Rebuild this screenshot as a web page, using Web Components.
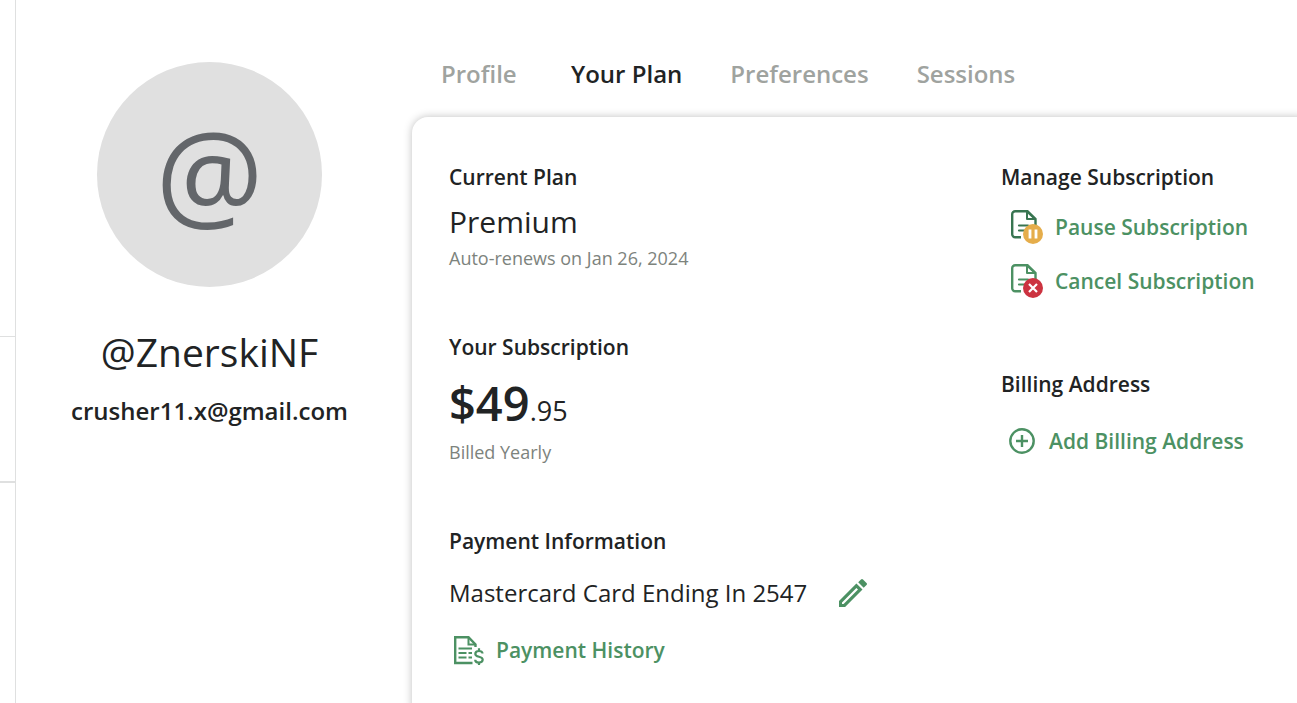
<!DOCTYPE html>
<html lang="en">
<head>
<meta charset="utf-8">
<meta name="viewport" content="width=device-width, initial-scale=1">
<title>Account – Your Plan</title>
<style>
  html, body { margin: 0; height: 100%; }
  body {
    font-family: "Open Sans", "Noto Sans", sans-serif;
    color: #212324;
    background: #fff;
    overflow: hidden;
  }
</style>
</head>
<body>
<account-page>
  <side-rail slot="rail"></side-rail>
  <user-summary slot="user" initial="@">
    <span slot="name">@ZnerskiNF</span>
    <span slot="email">crusher11.x@gmail.com</span>
  </user-summary>
  <tab-bar slot="tabs">
    <tab-link>Profile</tab-link>
    <tab-link current>Your Plan</tab-link>
    <tab-link>Preferences</tab-link>
    <tab-link>Sessions</tab-link>
  </tab-bar>
  <plan-card slot="card">
    <plan-section>
      <span slot="title">Current Plan</span>
      <plan-name>Premium</plan-name>
      <plan-note>Auto-renews on Jan 26, 2024</plan-note>
    </plan-section>
    <plan-section>
      <span slot="title">Your Subscription</span>
      <plan-price><span slot="whole">$49</span><span slot="cents">.95</span></plan-price>
      <plan-note>Billed Yearly</plan-note>
    </plan-section>
    <plan-section>
      <span slot="title">Payment Information</span>
      <payment-method>Mastercard Card Ending In 2547</payment-method>
      <action-link icon="history">Payment History</action-link>
    </plan-section>
    <plan-section slot="side">
      <span slot="title">Manage Subscription</span>
      <action-list>
        <action-link icon="pause">Pause Subscription</action-link>
        <action-link icon="cancel">Cancel Subscription</action-link>
      </action-list>
    </plan-section>
    <plan-section slot="side">
      <span slot="title">Billing Address</span>
      <action-list roomy>
        <action-link icon="add">Add Billing Address</action-link>
      </action-list>
    </plan-section>
  </plan-card>
</account-page>

<script>
const define = (name, html) => customElements.define(name, class extends HTMLElement {
  constructor() {
    super();
    this.attachShadow({ mode: 'open' }).innerHTML =
      typeof html === 'function' ? html(this) : html;
  }
});

const docShape = color => `
  <path d="M10 27.200H4.200a3 3 0 0 1-3-3V4.200a3 3 0 0 1 3-3h12.300L24.500 9v6" fill="none" stroke="${color}" stroke-width="2.400"/>
  <path d="M16 1.500V9h8z" fill="none" stroke="${color}" stroke-width="2" stroke-linejoin="round"/>
  <path d="M8 15.500h9M8 20.500h6" stroke="${color}" stroke-width="2.200" stroke-linecap="round"/>`;

const icons = {
  pause: `<svg width="34" height="34" viewBox="-2 0 34 34" aria-hidden="true">
    ${docShape('#387551')}
    <circle cx="22" cy="24" r="10" fill="#e5ad4b"/>
    <path d="M19 19.500v9M25 19.500v9" stroke="#fff" stroke-width="2.800"/></svg>`,
  cancel: `<svg width="34" height="34" viewBox="-2 0 34 34" aria-hidden="true">
    ${docShape('#4c9163')}
    <circle cx="22" cy="24" r="10" fill="#cc3340"/>
    <path d="M18 20l8 8M26 20l-8 8" stroke="#fff" stroke-width="2.200"/></svg>`,
  add: `<svg width="28" height="26" viewBox="0 0 28 26" fill="none" stroke="#4c9163" aria-hidden="true">
    <circle cx="13" cy="13" r="11.700" stroke-width="2.400"/>
    <path d="M13 7v12M7 13h12" stroke-width="2.400"/></svg>`,
  history: `<svg width="31" height="30" viewBox="-1 -1 31 30" fill="none" stroke="#4c9163" aria-hidden="true">
    <path d="M18.500 27H1.200V1.200h13.300L21.500 8.500V11" stroke-width="2.400"/>
    <path d="M14.500 1.500v7h7" stroke-width="2"/>
    <path d="M4.500 12.500h13.500M4.500 17h8M14.500 17h3.500M4.500 21.500h8M14.500 21.500h3.500" stroke-width="2"/>
    <path d="M28.500 17.500c0-1.700-1.500-2.500-3.500-2.500s-3.700.9-3.700 2.900c0 3.800 7.400 1.900 7.400 5.700 0 2-1.700 3-3.700 3s-3.800-.9-3.800-2.800M25 12.300v3M25 26.500v2.500" stroke-width="2.200"/></svg>`,
  edit: `<svg width="28" height="28" viewBox="0 0 28 28" aria-hidden="true">
    <path fill="#4c9163" fill-rule="evenodd" d="M17.400 4.500 23.500 10.600 6.100 28H0v-6.100zM17.400 9 3 23.400V25h1.600L19 10.600z"/>
    <path fill="#4c9163" d="M19.200 3.300 22 .5q1-1 2 0L27.500 4q1 1 0 2L24.700 8.800z"/></svg>`
};

define('account-page', `
  <style>
    :host { display: flex; min-height: 100vh; overflow: hidden; }
    .user { flex: 0 0 387px; }
    main { flex: 1; min-width: 0; display: flex; flex-direction: column; padding-left: 9px; }
  </style>
  <slot name="rail"></slot>
  <aside class="user"><slot name="user"></slot></aside>
  <main><slot name="tabs"></slot><slot name="card"></slot></main>`);

define('side-rail', `
  <style>
    :host { display: flex; flex-direction: column; flex: 0 0 15px; border-right: 1px solid #dfe0e0; }
    div { box-sizing: border-box; border-bottom: 1px solid #dfe0e0; }
    .first { height: 337px; }
    .second { height: 146px; border-bottom-width: 2px; }
  </style>
  <div class="first"></div><div class="second"></div>`);

define('user-summary', el => `
  <style>
    :host { display: flex; flex-direction: column; align-items: center; padding-top: 62px; }
    .avatar {
      display: flex; justify-content: center;
      width: 225px; height: 225px; border-radius: 50%;
      background: #e0e0e0; color: #63666a; font-size: 120px; line-height: 222px;
    }
    h1 { margin: 36px 0 0; font-size: 39px; line-height: 58px; font-weight: 400; }
    p { margin: 12px 0 0; font-size: 24px; line-height: 36px; font-weight: 600; }
  </style>
  <div class="avatar">${el.getAttribute('initial')}</div>
  <h1><slot name="name"></slot></h1>
  <p><slot name="email"></slot></p>`);

define('tab-bar', `
  <style>
    nav { display: flex; gap: 48px; padding: 54px 29px 23px; }
  </style>
  <nav aria-label="Account"><slot></slot></nav>`);

define('tab-link', el => `
  <style>
    :host { display: block; min-width: 82px; }
    a { font-size: 24px; line-height: 40px; font-weight: 600; color: #9fa39f; text-decoration: none; white-space: nowrap; }
    a[aria-current] { color: #212324; }
  </style>
  <a href="#"${el.hasAttribute('current') ? ' aria-current="page"' : ''}><slot></slot></a>`);

define('plan-card', `
  <style>
    :host {
      flex: 1; display: grid; grid-template-columns: minmax(0, 1fr) 312px; align-items: start;
      margin: 0 -16px -16px 0; padding: 46px 0 40px 37px;
      border-radius: 16px; background: #fff; box-shadow: 0 0 8px rgba(0, 0, 0, .25);
    }
    div { display: flex; flex-direction: column; gap: 62px; }
  </style>
  <div><slot></slot></div>
  <div><slot name="side"></slot></div>`);

define('plan-section', `
  <style>
    :host { display: block; }
    h2 { margin: 0 0 8px; font-size: 21px; line-height: 28px; font-weight: 600; }
  </style>
  <h2><slot name="title"></slot></h2>
  <slot></slot>`);

define('plan-name', `
  <style>:host { display: block; font-size: 30px; line-height: 46px; }</style>
  <slot></slot>`);

define('plan-note', `
  <style>:host { display: block; font-size: 18px; line-height: 26px; color: #7d837d; }</style>
  <slot></slot>`);

define('plan-price', `
  <style>
    :host { display: flex; align-items: baseline; height: 70px; font-size: 27px; line-height: 68px; }
    strong { font-size: 47px; font-weight: 600; }
  </style>
  <strong><slot name="whole"></slot></strong><slot name="cents"></slot>`);

define('payment-method', `
  <style>
    :host { display: flex; align-items: center; gap: 32px; height: 60px; font-size: 24px; line-height: 32px; }
    button { display: flex; padding: 0; border: 0; background: none; cursor: pointer; }
  </style>
  <span><slot></slot></span>
  <button type="button" aria-label="Edit payment method">${icons.edit}</button>`);

define('action-list', `
  <style>
    :host { display: flex; flex-direction: column; padding: 1px 0 0 4px; }
    :host([roomy]) { padding-top: 8px; }
  </style>
  <slot></slot>`);

define('action-link', el => `
  <style>
    :host { display: block; }
    a {
      display: inline-flex; align-items: center; gap: 12px; height: 54px; padding-left: 4px;
      font-size: 21px; line-height: 28px; font-weight: 600; color: #4c9163; text-decoration: none; white-space: nowrap;
    }
    svg { flex: none; }
  </style>
  <a href="#">${icons[el.getAttribute('icon')]}<slot></slot></a>`);
</script>
</body>
</html>
